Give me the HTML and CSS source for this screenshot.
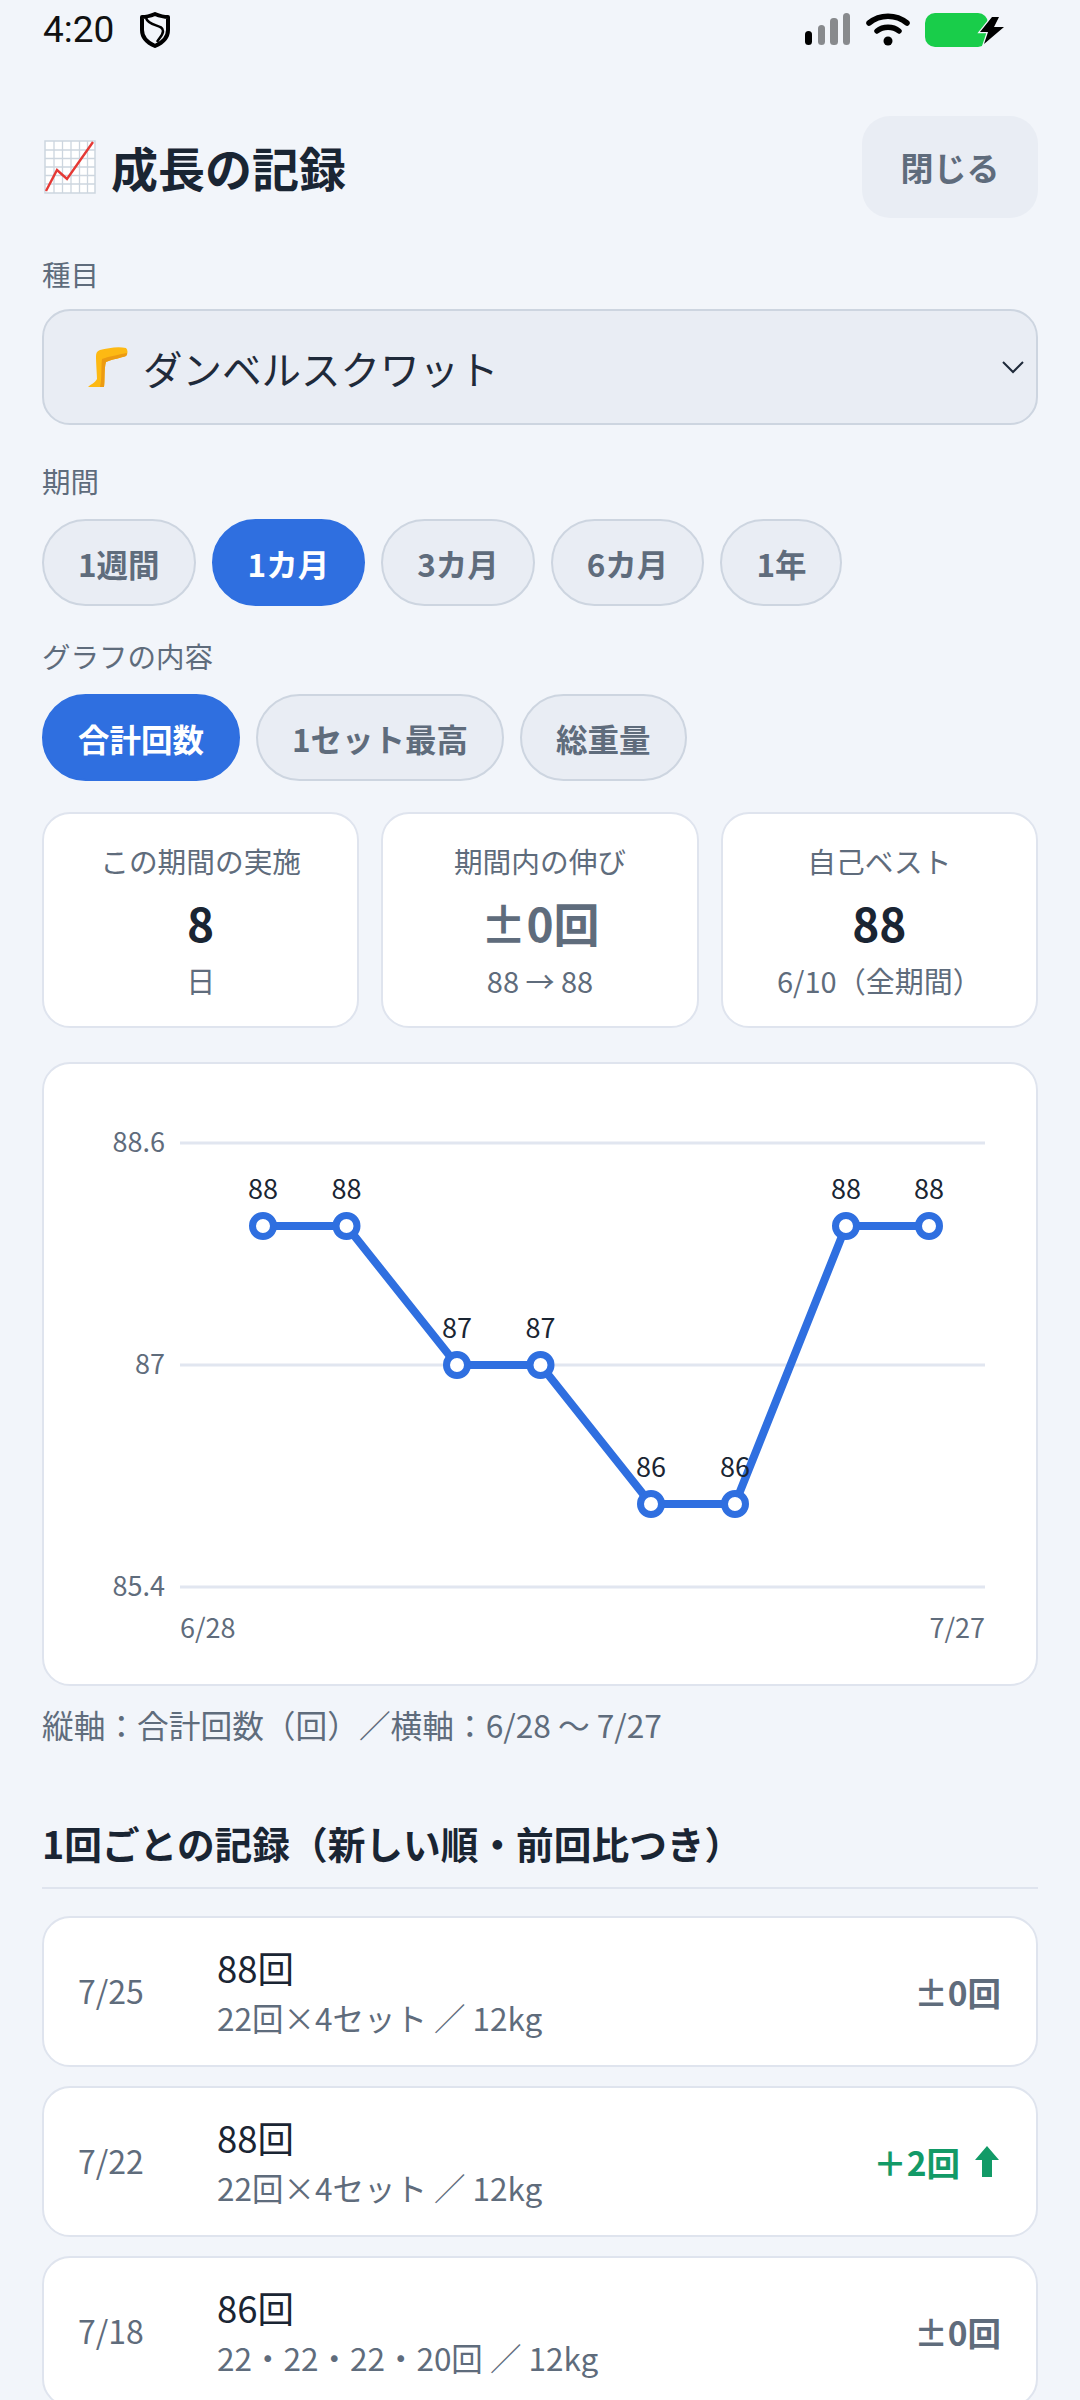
FILE: index.html
```html
<!DOCTYPE html>
<html lang="ja">
<head>
  <meta charset="UTF-8">
  <title>成長の記録</title>
  <link rel="stylesheet" href="styles.css">
</head>
<body>

  <div class="statusbar">
    <span class="time">4:20</span>
    <svg class="shield" width="30" height="36" viewBox="0 0 30 36">
      <path d="M15 2 C20 4 24 5 28 5 V18 C28 26 22 31 15 34 C8 31 2 26 2 18 V5 C6 5 10 4 15 2 Z" fill="none" stroke="#000" stroke-width="4" stroke-linejoin="round"/>
      <path d="M6 6 C9 15 23 12 23 19 C23 23 20 25 17 30" fill="none" stroke="#000" stroke-width="2.500"/>
    </svg>
    <span class="spacer"></span>
    <svg width="46" height="34" viewBox="0 0 46 34">
      <rect x="0" y="18" width="7" height="14" rx="3.500" fill="#000"/>
      <rect x="13" y="12" width="7" height="20" rx="3.500" fill="#888a8d"/>
      <rect x="25" y="5" width="8" height="27" rx="3.500" fill="#888a8d"/>
      <rect x="38" y="0" width="7" height="32" rx="3.500" fill="#888a8d"/>
    </svg>
    <svg class="wifi" width="44" height="34" viewBox="0 0 44 34">
      <path d="M3 10 C14 1 30 1 41 10" fill="none" stroke="#000" stroke-width="5.500" stroke-linecap="round"/>
      <path d="M11 18 C17 13 27 13 33 18" fill="none" stroke="#000" stroke-width="5.500" stroke-linecap="round"/>
      <circle cx="22" cy="28" r="4.500" fill="#000"/>
    </svg>
    <svg class="battery" width="82" height="36" viewBox="0 0 82 36">
      <rect x="0" y="1" width="63" height="34" rx="10" fill="#19cd4a"/>
      <path d="M67 5 L55 20 H63 L59 32 L79 15 H69 L74 5 Z" fill="#000" stroke="#f2f5fa" stroke-width="2.500" paint-order="stroke"/>
    </svg>
  </div>

  <main class="page">
    <header class="header">
      <h1 class="title">
        <svg class="title-icon" width="52" height="54" viewBox="0 0 52 54">
          <rect x="1" y="1" width="50" height="52" fill="#fff" stroke="#cdd6df" stroke-width="1.500"/>
          <path d="M10 1V53M18.500 1V53M27 1V53M35.500 1V53M43.500 1V53M1 10H51M1 18.500H51M1 27H51M1 35.500H51M1 44H51" fill="none" stroke="#cdd6df" stroke-width="1.300"/>
          <path d="M2 51 L13 30 L23 39 L49 2" fill="none" stroke="#e53935" stroke-width="2.400"/>
        </svg>
        成長の記録
      </h1>
      <button class="close-btn">閉じる</button>
    </header>

    <div class="label label-exercise">種目</div>
    <div class="select">
      <svg class="leg" width="40" height="42" viewBox="0 0 40 42">
        <path d="M38 2 C30 0 20 2 12 4 C9 5 8 7 8 10 C8 18 9 28 9 33 C7 37 3 38 0 41 L16 41 C17 35 16 22 18 16 C25 13 33 12 38 10 C40 8 40 4 38 2 Z" fill="#fdb913"/>
        <path d="M38 10 C33 12 25 13 18 16 C16 22 17 35 16 41 L12 41 C14 34 13 20 14 13 C22 10 30 9 39 7 C39 8 39 9 38 10 Z" fill="#ec9b12"/>
      </svg>
      <span class="select-text">ダンベルスクワット</span>
      <svg class="chevron" width="24" height="14" viewBox="0 0 24 14">
        <path d="M2 2 L12 12 L22 2" fill="none" stroke="#1f2a3a" stroke-width="2"/>
      </svg>
    </div>

    <div class="label label-range">期間</div>
    <div class="pills">
      <span class="pill">1週間</span>
      <span class="pill active">1カ月</span>
      <span class="pill">3カ月</span>
      <span class="pill">6カ月</span>
      <span class="pill">1年</span>
    </div>

    <div class="label label-kind">グラフの内容</div>
    <div class="pills">
      <span class="pill active">合計回数</span>
      <span class="pill">1セット最高</span>
      <span class="pill">総重量</span>
    </div>

    <section class="stats">
      <div class="stat">
        <div class="stat-label">この期間の実施</div>
        <div class="stat-value">8</div>
        <div class="stat-sub">日</div>
      </div>
      <div class="stat">
        <div class="stat-label">期間内の伸び</div>
        <div class="stat-value muted">±0回</div>
        <div class="stat-sub">88 → 88</div>
      </div>
      <div class="stat">
        <div class="stat-label">自己ベスト</div>
        <div class="stat-value">88</div>
        <div class="stat-sub">6/10（全期間）</div>
      </div>
    </section>

    <section class="chart">
      <svg width="994" height="624" viewBox="0 0 994 624">
        <g class="grid">
          <line x1="138" y1="81" x2="943" y2="81"/>
          <line x1="138" y1="303" x2="943" y2="303"/>
          <line x1="138" y1="525" x2="943" y2="525"/>
        </g>
        <g class="axis">
          <text x="123" y="90" text-anchor="end">88.6</text>
          <text x="123" y="312" text-anchor="end">87</text>
          <text x="123" y="534" text-anchor="end">85.4</text>
          <text x="138" y="576">6/28</text>
          <text x="943" y="576" text-anchor="end">7/27</text>
        </g>
        <polyline class="line" points="221,164 304.5,164 415,303 498.5,303 609,442 693,442 804,164 887,164"/>
        <g class="dots">
          <circle cx="221" cy="164" r="10.500"/>
          <circle cx="304.500" cy="164" r="10.500"/>
          <circle cx="415" cy="303" r="10.500"/>
          <circle cx="498.500" cy="303" r="10.500"/>
          <circle cx="609" cy="442" r="10.500"/>
          <circle cx="693" cy="442" r="10.500"/>
          <circle cx="804" cy="164" r="10.500"/>
          <circle cx="887" cy="164" r="10.500"/>
        </g>
        <g class="values" text-anchor="middle">
          <text x="221" y="137">88</text>
          <text x="304.500" y="137">88</text>
          <text x="415" y="276">87</text>
          <text x="498.500" y="276">87</text>
          <text x="609" y="415">86</text>
          <text x="693" y="415">86</text>
          <text x="804" y="137">88</text>
          <text x="887" y="137">88</text>
        </g>
      </svg>
    </section>

    <p class="caption">縦軸：合計回数（回）／横軸：6/28 〜 7/27</p>

    <h2 class="section-title">1回ごとの記録（新しい順・前回比つき）</h2>

    <div class="records">
      <div class="record">
        <span class="record-date">7/25</span>
        <div class="record-body">
          <div class="record-main">88回</div>
          <div class="record-sub">22回×4セット ／ 12kg</div>
        </div>
        <span class="record-delta">±0回</span>
      </div>
      <div class="record">
        <span class="record-date">7/22</span>
        <div class="record-body">
          <div class="record-main">88回</div>
          <div class="record-sub">22回×4セット ／ 12kg</div>
        </div>
        <span class="record-delta up">＋2回
          <svg class="up-arrow" width="24" height="31" viewBox="0 0 24 31"><path d="M12 0 L24 14 H17 V31 H7 V14 H0 Z" fill="#129a67"/></svg>
        </span>
      </div>
      <div class="record">
        <span class="record-date">7/18</span>
        <div class="record-body">
          <div class="record-main">86回</div>
          <div class="record-sub">22・22・22・20回 ／ 12kg</div>
        </div>
        <span class="record-delta">±0回</span>
      </div>
    </div>
  </main>

</body>
</html>
```
FILE: styles.css
```css
html, body { margin: 0; padding: 0; height: 2400px; overflow: hidden; }
body { background: #f2f5fa; color: #1a2533; font-family: "Noto Sans CJK JP", "Noto Sans", sans-serif; }

.statusbar { display: flex; align-items: center; height: 60px; padding: 0 73px 0 43px; box-sizing: border-box; }
.time { font-family: Roboto, sans-serif; font-size: 37px; color: #111; line-height: 60px; }
.shield { margin-left: 26px; }
.spacer { flex: 1; }
.wifi { margin-left: 15px; }
.battery { margin-left: 15px; }

.page { padding: 0 42px; }

.header { display: flex; align-items: center; justify-content: space-between; margin-top: 56px; height: 102px; }
.title { display: flex; align-items: center; gap: 15px; margin: 0; font-size: 47px; font-weight: 700; line-height: 60px; color: #1a2533; }
.title-icon { flex: none; margin-left: 2px; }
.close-btn { width: 176px; height: 102px; border: none; border-radius: 28px; background: #e9edf4; color: #5f6c7c; font-family: inherit; font-size: 33px; font-weight: 700; padding: 0; }

.label { font-size: 28.5px; line-height: 40px; color: #5f6c7c; }
.label-exercise { margin-top: 36px; }
.label-range { margin-top: 36px; }
.label-kind { margin-top: 30px; }

.select { display: flex; align-items: center; height: 116px; margin-top: 15px; padding: 0 11px 0 44px; box-sizing: border-box; background: #e9edf4; border: 2px solid #cdd5e0; border-radius: 28px; }
.leg { flex: none; }
.select-text { flex: 1; margin-left: 15px; font-size: 39.5px; color: #1f2a3a; }
.chevron { flex: none; }

.pills { display: flex; gap: 16px; margin-top: 18px; }
.pill { display: flex; align-items: center; height: 87px; padding: 0 34px; box-sizing: border-box; border: 2px solid #cdd5e0; border-radius: 44px; background: #e9edf4; color: #5f6c7c; font-size: 31.5px; font-weight: 700; }
.pill.active { background: #2f6fe0; border-color: #2f6fe0; color: #fff; }

.stats { display: grid; grid-template-columns: repeat(3, 1fr); gap: 22px; margin-top: 31px; }
.stat { height: 216px; box-sizing: border-box; padding-top: 27px; background: #fff; border: 2px solid #dfe4ee; border-radius: 28px; text-align: center; }
.stat-label { font-size: 28.7px; line-height: 40px; color: #5f6c7c; }
.stat-value { margin-top: 9px; font-size: 46px; font-weight: 700; line-height: 64px; color: #1a2533; }
.stat-value.muted { color: #5f6c7c; }
.stat-sub { margin-top: 6px; font-size: 29px; line-height: 40px; color: #5f6c7c; }

.chart { height: 624px; margin-top: 34px; box-sizing: border-box; background: #fff; border: 2px solid #dfe4ee; border-radius: 28px; overflow: hidden; }
.chart svg { display: block; margin: -2px; }
.grid line { stroke: #e1e6f0; stroke-width: 3; }
.axis text { font-size: 27px; fill: #5f6c7c; }
.line { fill: none; stroke: #2f6fe0; stroke-width: 8; stroke-linejoin: round; }
.dots circle { fill: #fff; stroke: #2f6fe0; stroke-width: 7; }
.values text { font-size: 27px; fill: #1a2533; }

.caption { margin: 16px 0 0; font-size: 31.7px; line-height: 44px; color: #5f6c7c; }

.section-title { margin: 72px 0 0; padding-bottom: 19px; border-bottom: 2px solid #dfe4ee; font-size: 37.7px; font-weight: 700; line-height: 50px; color: #1a2533; }

.records { display: flex; flex-direction: column; gap: 19px; margin-top: 27px; }
.record { display: flex; align-items: center; height: 151px; box-sizing: border-box; padding: 0 35px 0 34px; background: #fff; border: 2px solid #dfe4ee; border-radius: 28px; }
.record-date { width: 139px; flex: none; padding-bottom: 4px; font-size: 32px; color: #5f6c7c; }
.record-body { flex: 1; }
.record-main { margin-top: -3px; font-size: 36.5px; line-height: 50px; color: #1a2533; }
.record-sub { margin-top: 3px; font-size: 31.5px; line-height: 42px; color: #5f6c7c; }
.record-delta { display: flex; align-items: center; gap: 15px; font-size: 33.5px; font-weight: 700; color: #5f6c7c; }
.record-delta.up { color: #129a67; }
.up-arrow { flex: none; margin-right: 2px; }
```
